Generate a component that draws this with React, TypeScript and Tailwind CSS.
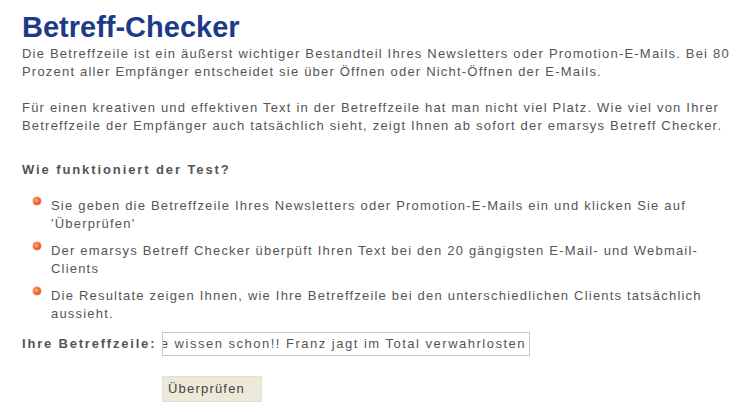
export default function App() {
  const items = [
    ["Sie geben die Betreffzeile Ihres Newsletters oder Promotion-E-Mails ein und klicken Sie auf", "'Überprüfen'"],
    ["Der emarsys Betreff Checker überpüft Ihren Text bei den 20 gängigsten E-Mail- und Webmail-", "Clients"],
    ["Die Resultate zeigen Ihnen, wie Ihre Betreffzeile bei den unterschiedlichen Clients tatsächlich", "aussieht."],
  ];

  return (
    <div className="min-h-[412px] w-[750px] overflow-hidden bg-white font-['Liberation_Sans',Arial,sans-serif] text-[13px] leading-[18px] tracking-[1.2px] text-[#555]">
      <div className="pl-[22px] pt-[11px]">
        <h1 className="text-[29px] leading-[32px] font-bold tracking-normal text-[#1d3a8a]">Betreff-Checker</h1>
        <p className="mt-[2px] whitespace-nowrap">
          Die Betreffzeile ist ein äußerst wichtiger Bestandteil Ihres Newsletters oder Promotion-E-Mails. Bei 80
          <br />
          Prozent aller Empfänger entscheidet sie über Öffnen oder Nicht-Öffnen der E-Mails.
        </p>
        <p className="mt-[18px] whitespace-nowrap">
          Für einen kreativen und effektiven Text in der Betreffzeile hat man nicht viel Platz. Wie viel von Ihrer
          <br />
          Betreffzeile der Empfänger auch tatsächlich sieht, zeigt Ihnen ab sofort der emarsys Betreff Checker.
        </p>
        <h2 className="mt-[26px] font-bold tracking-[1.9px]">Wie funktioniert der Test?</h2>
        <ul className="mt-[18px] flex flex-col gap-[9px] pl-[11px]">
          {items.map(([a, b]) => (
            <li key={a} className="flex items-start">
              <span className="mr-[10px] h-[8px] w-[8px] shrink-0 rounded-full bg-[radial-gradient(circle_at_40%_40%,#fbb08a_0%,#ec5d24_55%,#d8461a_100%)] shadow-[0_0_1px_1px_#fbd6c4]" />
              <span className="whitespace-nowrap">
                {a}
                <br />
                {b}
              </span>
            </li>
          ))}
        </ul>
        <div className="mt-[9px] flex items-center">
          <label className="w-[140px] font-bold tracking-[1.8px]">Ihre Betreffzeile:</label>
          <div className="flex h-[24px] w-[368px] items-center justify-end overflow-hidden whitespace-nowrap border border-[#c9c9c9] bg-white pr-[3px] tracking-[1.5px] text-[#555]">
            Sie wissen schon!! Franz jagt im Total verwahrlosten
          </div>
        </div>
        <div className="mt-[20px] pl-[140px]">
          <button className="h-[26px] w-[100px] border border-[#e2dfd3] bg-[#ece9d8] pl-[5px] text-left text-[13px] text-[#444]">
            Überprüfen
          </button>
        </div>
      </div>
    </div>
  );
}
